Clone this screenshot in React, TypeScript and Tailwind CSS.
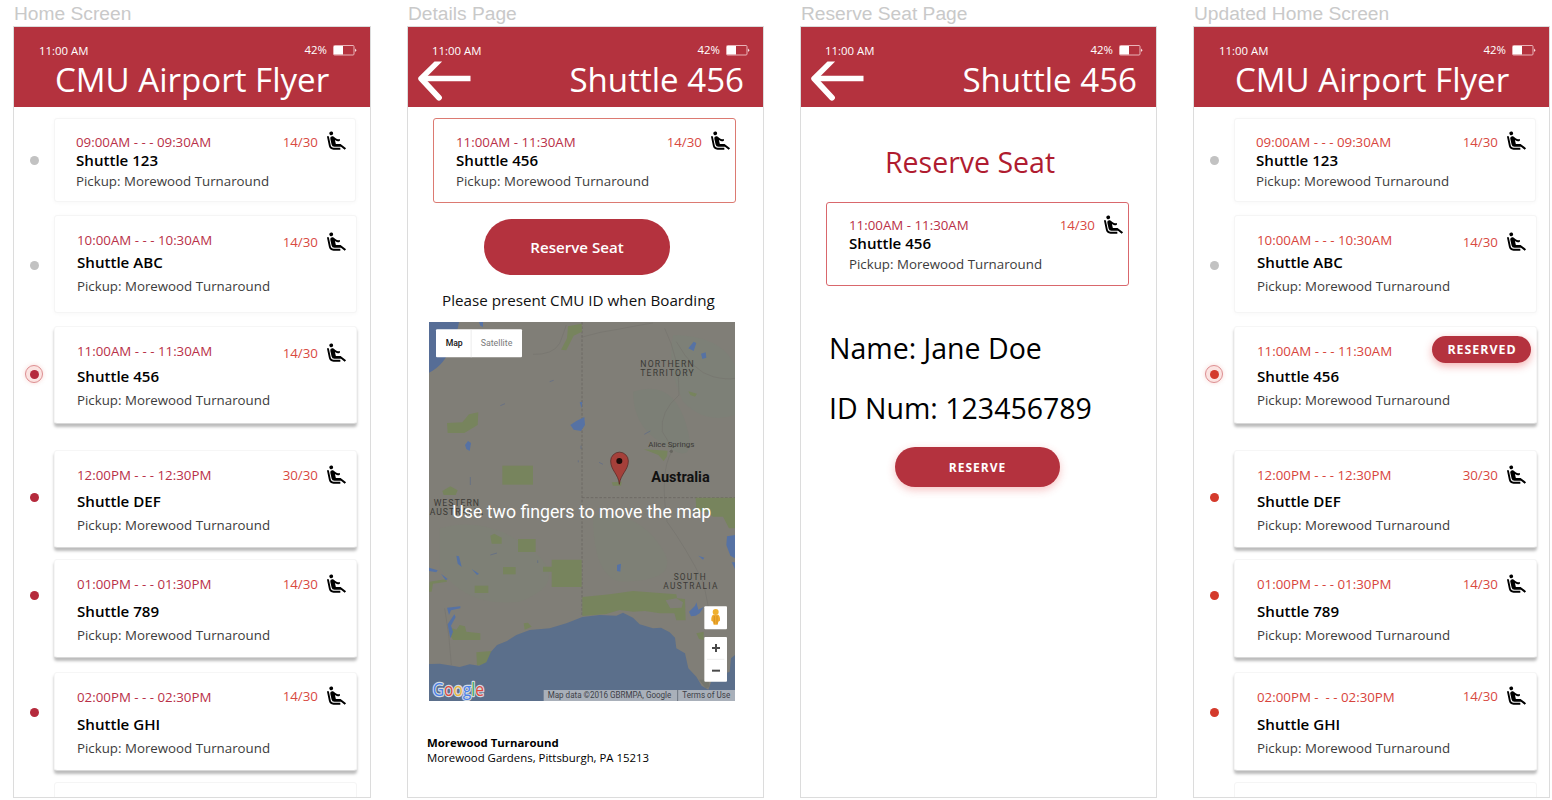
import type { ReactNode } from 'react';
import { MdAirlineSeatReclineExtra } from 'react-icons/md';

type Dot = 'past' | 'current' | 'next';

type Ride = {
  time: string;
  name: string;
  seats: string;
  dot: Dot;
  dotOffset: string;
  top: string;
  card: string;
  textPad: string;
  nameGap: string;
  pickupGap: string;
  seatPad: string;
  countGap: string;
};

const flat = 'border border-[#f5f5f5] shadow-[0_1px_4px_rgba(0,0,0,0.03)]';
const raised = 'border border-[#f6f6f6] border-b-[#d8d8d8] shadow-[0_3px_3px_rgba(0,0,0,0.27)]';

const rides: Ride[] = [
  {
    time: '09:00AM - - - 09:30AM', name: 'Shuttle 123', seats: '14/30', dot: 'past', dotOffset: 'pt-[38px]',
    top: 'mt-[11px]', card: `h-[84px] w-[302px] ${flat}`,
    textPad: 'pt-[14px] pl-[21px]', nameGap: 'mt-0', pickupGap: 'mt-[3px]', seatPad: 'pt-[10px] pr-[8px]', countGap: 'mt-[4px]',
  },
  {
    time: '10:00AM - - - 10:30AM', name: 'Shuttle ABC', seats: '14/30', dot: 'past', dotOffset: 'pt-[46px]',
    top: 'mt-[13px]', card: `h-[98px] w-[303px] ${flat}`,
    textPad: 'pt-[15px] pl-[22px]', nameGap: 'mt-[4px]', pickupGap: 'mt-[6px]', seatPad: 'pt-[14px] pr-[9px]', countGap: 'mt-[3px]',
  },
  {
    time: '11:00AM - - - 11:30AM', name: 'Shuttle 456', seats: '14/30', dot: 'current', dotOffset: 'pt-[39px]',
    top: 'mt-[13px]', card: `h-[98px] w-[303px] ${raised}`,
    textPad: 'pt-[15px] pl-[22px]', nameGap: 'mt-[7px]', pickupGap: 'mt-[6px]', seatPad: 'pt-[14px] pr-[9px]', countGap: 'mt-[3px]',
  },
  {
    time: '12:00PM - - - 12:30PM', name: 'Shuttle DEF', seats: '30/30', dot: 'next', dotOffset: 'pt-[43px]',
    top: 'mt-[26px]', card: `h-[98px] w-[303px] ${raised}`,
    textPad: 'pt-[15px] pl-[22px]', nameGap: 'mt-[8px]', pickupGap: 'mt-[6px]', seatPad: 'pt-[12px] pr-[9px]', countGap: 'mt-[3px]',
  },
  {
    time: '01:00PM - - - 01:30PM', name: 'Shuttle 789', seats: '14/30', dot: 'next', dotOffset: 'pt-[32px]',
    top: 'mt-[11px]', card: `h-[99px] w-[303px] ${raised}`,
    textPad: 'pt-[15px] pl-[22px]', nameGap: 'mt-[9px]', pickupGap: 'mt-[6px]', seatPad: 'pt-[12px] pr-[9px]', countGap: 'mt-[3px]',
  },
  {
    time: '02:00PM - - - 02:30PM', name: 'Shuttle GHI', seats: '14/30', dot: 'next', dotOffset: 'pt-[36px]',
    top: 'mt-[14px]', card: `h-[99px] w-[303px] ${raised}`,
    textPad: 'pt-[15px] pl-[22px]', nameGap: 'mt-[9px]', pickupGap: 'mt-[6px]', seatPad: 'pt-[11px] pr-[9px]', countGap: 'mt-[3px]',
  },
];

function Battery() {
  return (
    <svg width="24" height="11" viewBox="0 0 24 11" className="block">
      <rect x="0.5" y="0.5" width="20.500" height="9.500" rx="1" fill="none" stroke="#e9b4b8" />
      <rect x="1" y="1" width="9" height="8.500" fill="#fff" />
      <path d="M22 3.500 L23.600 5.200 L22 7Z" fill="#f6dcde" />
    </svg>
  );
}

function BackArrow() {
  return (
    <svg width="54" height="42" viewBox="0.5 0.3 54 42" className="block">
      <path d="M53 17.800H5" stroke="#fff" strokeWidth="5.400" fill="none" />
      <path
        d="M17 0.800 H24.600 L7.600 17.800 L23.600 35 A2.900 2.900 0 0 1 19.400 39 L1.200 19.600 Q0 17.800 1.200 16.200 Z"
        fill="#fff"
      />
    </svg>
  );
}

function Header({ title, back = false }: { title: string; back?: boolean }) {
  return (
    <div className="flex h-[80px] shrink-0 flex-col bg-[#b4323e] text-white">
      <div className="flex items-start justify-between pt-[15px] pr-[13px] pl-[25px] text-[11.4px] leading-[16px]">
        <span className={back ? '-ml-px pt-px' : 'pt-px'}>11:00 AM</span>
        <span className="flex items-start gap-[6px]">
          <span>42%</span>
          <span className="pt-[3px]">
            <Battery />
          </span>
        </span>
      </div>
      {back ? (
        <div className="flex items-start justify-between pr-[19px] pl-[10px]">
          <div className="pt-[2px]">
            <BackArrow />
          </div>
          <span className="mt-px text-[33.1px] leading-[40px] whitespace-nowrap">{title}</span>
        </div>
      ) : (
        <span className="mt-px pl-[41px] text-[33.1px] leading-[40px] whitespace-nowrap">{title}</span>
      )}
    </div>
  );
}

function Artboard({ label, width, children }: { label: string; width: string; children: ReactNode }) {
  return (
    <section className={`flex shrink-0 flex-col ${width}`}>
      <h2 className="h-[26px] pt-[3px] pl-[1px] font-['Liberation_Sans',sans-serif] text-[19.2px] leading-[21px] whitespace-nowrap text-[#c9c9c9]">
        {label}
      </h2>
      <div className="flex h-[772px] flex-col overflow-hidden border border-[#dcdcdc] bg-white">{children}</div>
    </section>
  );
}

function StatusDot({ kind, tone }: { kind: Dot; tone: string }) {
  if (kind === 'current') {
    return (
      <span className="flex size-[18px] items-center justify-center rounded-full border border-[#dd8f92] bg-[#fbe3e1] shadow-[0_0_4px_rgba(230,90,80,0.25)]">
        <span className={`size-[9px] rounded-full ${tone}`} />
      </span>
    );
  }
  return <span className={`size-[9px] rounded-full ${kind === 'past' ? 'bg-[#c2c2c2]' : tone}`} />;
}

function Seats({ value, gap }: { value: string; gap: string }) {
  return (
    <div className="flex items-start gap-[7px]">
      <span className={`text-[13.33px] leading-[18px] text-[#d8493f] ${gap}`}>{value}</span>
      <MdAirlineSeatReclineExtra className="-mr-px size-[23px] translate-y-[0.5px] text-black" />
    </div>
  );
}

function RideText({ time, name, tone, nameGap, pickupGap }: { time: string; name: string; tone: string; nameGap: string; pickupGap: string }) {
  return (
    <div className="flex flex-col whitespace-nowrap">
      <span className={`text-[13.3px] leading-[18px] whitespace-pre ${tone}`}>{time}</span>
      <span className={`text-[15.1px] leading-[18px] font-semibold text-black ${nameGap}`}>{name}</span>
      <span className={`text-[13.3px] leading-[18px] text-[#3c3c3c] ${pickupGap}`}>Pickup: Morewood Turnaround</span>
    </div>
  );
}

function HomeScreen({ updated = false }: { updated?: boolean }) {
  const timeTone = updated ? 'text-[#d8443c]' : 'text-[#b93048]';
  const dotTone = updated ? 'bg-[#d43a2c]' : 'bg-[#b52a3c]';
  return (
    <>
      <Header title="CMU Airport Flyer" />
      {rides.map((ride) => {
        const reserved = updated && ride.dot === 'current';
        const time = updated && ride.name === 'Shuttle GHI' ? '02:00PM -  - - 02:30PM' : ride.time;
        return (
          <div key={ride.name} className={`flex shrink-0 items-start ${ride.top}`}>
            <div className={`flex w-10 shrink-0 justify-center ${ride.dotOffset}`}>
              <StatusDot kind={ride.dot} tone={dotTone} />
            </div>
            <div className={`relative flex shrink-0 items-start justify-between rounded-[3px] bg-white ${ride.card}`}>
              <div className={ride.textPad}>
                <RideText time={time} name={ride.name} tone={timeTone} nameGap={ride.nameGap} pickupGap={ride.pickupGap} />
              </div>
              {reserved ? (
                <div className="absolute top-[9px] right-[5px] flex h-[27px] w-[99px] items-center justify-center rounded-full bg-[#b4323e] pt-px pl-px text-[12.4px] font-bold tracking-[1px] text-white shadow-[0_3px_8px_rgba(225,60,60,0.4)]">
                  RESERVED
                </div>
              ) : (
                <div className={ride.seatPad}>
                  <Seats value={ride.seats} gap={ride.countGap} />
                </div>
              )}
            </div>
          </div>
        );
      })}
      <div className="mt-[11px] ml-10 h-[98px] w-[303px] shrink-0 rounded-[3px] border border-[#f5f5f5]" />
    </>
  );
}

function SelectedRide({ margin, border, pad }: { margin: string; border: string; pad: string }) {
  return (
    <div className={`flex w-[303px] shrink-0 items-start justify-between rounded-[3px] border ${border} ${margin}`}>
      <div className={`pl-[22px] ${pad}`}>
        <RideText time="11:00AM - 11:30AM" name="Shuttle 456" tone="text-[#b93048]" nameGap="mt-0" pickupGap="mt-[3px]" />
      </div>
      <div className="pt-[10px] pr-[4px]">
        <Seats value="14/30" gap={pad === 'pt-[13px]' ? 'mt-[3px]' : 'mt-[4px]'} />
      </div>
    </div>
  );
}

function MapView() {
  return (
    <svg
      width="306"
      height="379"
      viewBox="28 21 918 1137"
      className="mt-[11px] ml-[21px] block shrink-0"
      fontFamily="Roboto, sans-serif"
    >
      <rect x="28" y="21" width="918" height="1137" fill="#807e77" />
      <path d="M640 230 Q760 190 800 330 T720 380 Q640 330 640 230Z" fill="#7c7f76" />
      <path d="M760 60 Q900 60 946 150 V300 Q860 330 790 260 Q740 150 760 60Z" fill="#7d8077" />
      <path d="M60 640 Q200 600 330 700 T300 860 Q140 880 60 760Z" fill="#7e8076" />
      <path d="M520 600 Q640 580 720 690 T600 800 Q520 780 520 600Z" fill="#7e8076" />
      <g fill="none" stroke="#74726b" strokeWidth="1.6">
        <path d="M488 66 Q540 50 600 42 Q660 30 700 24" />
        <path d="M735 40 Q780 130 778 240 Q720 290 728 350 Q760 400 756 410 Q720 470 742 620 Q800 700 850 800 Q860 840 870 900" />
        <path d="M340 118 Q400 120 420 85 Q430 60 440 30" />
        <path d="M770 80 Q820 170 880 185 Q920 195 946 190" />
        <path d="M75 880 Q90 960 95 1050" />
      </g>
      <g fill="none" stroke="#68665f" strokeWidth="2.4" strokeDasharray="8 5">
        <path d="M487 21 V900" />
        <path d="M487 548 H946" />
      </g>
      {/* parks */}
      <g fill="#77845d">
        <path d="M445 34 L486 26 L487 50 L462 62 L440 106 L424 104 L442 70Z" />
        <path d="M82 324 L128 322 L148 298 L176 292 L174 330 L134 354 L84 354Z" />
        <path d="M248 452 H340 V509 H248Z" />
        <path d="M68 528 L92 514 L114 526 L108 540 H72Z" />
        <path d="M672 403 L744 407 L742 424 L732 438 L716 420Z" />
        <path d="M806 229 L832 236 L826 245 L812 240Z" />
        <path d="M576 502 L606 500 L604 512 H580Z" />
        <path d="M828 548 H946 V640 H928 L910 605 H880 L860 590 H830Z" />
        <path d="M212 662 L224 656 L246 668 V686 H216Z" />
        <path d="M295 672 H348 V711 H295Z" />
        <path d="M396 734 H486 V816 H396 V770 H370 V755 H396Z" />
        <path d="M250 756 H288 V778 H250Z" />
        <path d="M165 812 H206 V834 H165Z" />
        <path d="M488 846 L570 838 L640 828 L770 838 L772 850 L796 852 L798 916 H770 L764 895 L720 895 L676 888 L640 890 L600 885 L560 897 L488 903Z" />
        <path d="M92 960 L98 940 L110 944 L120 930 L136 934 L140 950 L182 955 V975 H100Z" />
        <path d="M170 1012 L215 1008 L205 1045 L172 1052Z" />
        <path d="M312 925 L325 923 L336 935 L315 944Z" />
        <path d="M830 955 L852 950 L852 975 L838 972Z" />
        <path d="M30 800 L80 792 L82 800 L40 806 L36 830 L28 830Z" />
      </g>
      <path d="M738 856 L770 850 L790 862 L786 878 L752 880Z" fill="#807e77" />
      {/* lakes */}
      <g fill="#5672a4">
        <path d="M28 21 H118 Q112 60 96 90 Q76 150 28 173Z" fill="#566d96" />
        <path d="M178 21 H190 V36 L182 32Z" />
        <path d="M452 330 L470 318 L494 306 L496 330 L484 348 L462 344Z" />
        <path d="M480 262 L488 260 L486 280Z" />
        <path d="M136 390 L145 378 L154 384 L150 408 L140 402Z" />
        <path d="M806 100 L822 80 L830 84 L822 108Z" />
        <path d="M844 116 L858 112 L860 128 L848 132Z" />
        <path d="M110 722 L118 724 L126 756 L114 746Z" />
        <path d="M28 758 L54 766 L50 772 L28 768Z" />
        <path d="M64 776 L84 792 L78 796Z" />
        <path d="M156 762 L178 776 L172 780Z" />
        <path d="M82 878 L122 874 L122 880 L94 886 L88 900Z" />
        <path d="M84 928 L104 898 L108 906 L94 932 L100 950 L92 970 L88 950Z" />
        <path d="M592 750 L604 746 L602 770 L592 768Z" />
        <path d="M836 722 L854 728 L850 734Z" />
        <path d="M922 664 L946 660 V730 L932 722 L920 690Z" />
        <path d="M808 890 L826 872 L830 862 L836 884 L852 876 L840 895 L828 902 L814 904Z" />
        <path d="M936 742 H946 V762Z" />
      </g>
      <g stroke="#5c6a8a" strokeWidth="2" fill="none">
        <path d="M390 200 L402 196" />
        <path d="M242 272 L256 266" />
        <path d="M538 442 L550 448" />
        <path d="M674 358 L692 348" />
        <path d="M212 720 L232 714" />
        <path d="M354 736 V744" />
        <path d="M152 486 V510" />
        <path d="M484 392 V402 M476 436 V442" />
      </g>
      {/* ocean */}
      <path
        d="M28 1047 L60 1046 L98 1052 L120 1056 L150 1048 L178 1052 L200 1042 L214 1010 L232 990 L262 978 L290 960 L330 945 L390 940 L440 925 L488 906 L540 900 L590 902 L610 893 L640 908 L660 928 L700 940 L724 938 L750 952 L766 968 L770 1000 L796 1015 L806 1060 L830 1085 L846 1112 L866 1124 L878 1090 L930 1070 L934 1030 L946 1020 V1158 H28Z"
        fill="#5b6f8b"
      />
      <path d="M838 1094 L866 1094 L870 1116 L858 1120Z" fill="#74766d" />
      {/* place names */}
      <g fill="#3b3a36">
        <text x="662" y="157" fontSize="26" textLength="160">NORTHERN</text>
        <text x="662" y="184" fontSize="26" textLength="160">TERRITORY</text>
        <text x="686" y="397" fontSize="24" textLength="138" lengthAdjust="spacingAndGlyphs">Alice Springs</text>
        <text x="42" y="573" fontSize="26" textLength="136">WESTERN</text>
        <text x="30" y="600" fontSize="26" textLength="160">AUSTRALIA</text>
        <text x="762" y="794" fontSize="25" textLength="96">SOUTH</text>
        <text x="731" y="821" fontSize="25" textLength="162">AUSTRALIA</text>
      </g>
      <circle cx="755" cy="409" r="5" fill="#66655f" />
      <text x="695" y="502" fontSize="43" fontWeight="700" fill="#111" textLength="175" lengthAdjust="spacingAndGlyphs">Australia</text>
      {/* marker */}
      <path d="M599 508 C597 478 573 466 573 438 A26.5 26.5 0 0 1 626 438 C626 466 602 478 599 508Z" fill="#a5403a" stroke="#5e2d29" strokeWidth="2.5" />
      <circle cx="599" cy="438" r="9" fill="#1d0c0a" />
      <text x="98" y="608" fontSize="55" fill="#fff" textLength="777" lengthAdjust="spacingAndGlyphs">Use two fingers to move the map</text>
      {/* map type switch */}
      <rect x="49" y="43" width="258" height="84" rx="3" fill="#fff" />
      <path d="M154.500 43 V127" stroke="#e4e4e4" strokeWidth="2" />
      <text x="78" y="93" fontSize="26" fontWeight="500" fill="#111" textLength="51">Map</text>
      <text x="183" y="93" fontSize="26" fill="#7a7a7a" textLength="95" lengthAdjust="spacingAndGlyphs">Satellite</text>
      {/* street view and zoom controls */}
      <rect x="854" y="874" width="68" height="69" rx="3" fill="#fff" />
      <circle cx="888" cy="891" r="9" fill="#efb02f" />
      <path d="M880 899 H896 Q902 903 901 917 L896 920 L894 929 H882 L880 920 L875 917 Q874 903 880 899Z" fill="#efa92c" />
      <path d="M884 903 V926 M892 903 V926" stroke="#c9861c" strokeWidth="2" />
      <rect x="854" y="966" width="68" height="134" rx="3" fill="#fff" />
      <path d="M862 1033 H914" stroke="#e6e6e6" strokeWidth="2" />
      <path d="M877 999 H901 M889 987 V1011" stroke="#4a4a4a" strokeWidth="6" />
      <path d="M877 1067 H901" stroke="#4a4a4a" strokeWidth="6" />
      {/* attribution */}
      <text x="39" y="1142" fontSize="53" fontWeight="500" textLength="154" lengthAdjust="spacingAndGlyphs" stroke="#d3dbe4" strokeWidth="7" strokeLinejoin="round" paintOrder="stroke" fontFamily="'Open Sans', sans-serif">
        <tspan fill="#4a80e8">G</tspan>
        <tspan fill="#df4a3d">o</tspan>
        <tspan fill="#efb83a">o</tspan>
        <tspan fill="#4a80e8">g</tspan>
        <tspan fill="#3da75a">l</tspan>
        <tspan fill="#df4a3d">e</tspan>
      </text>
      <rect x="372" y="1125" width="574" height="33" fill="#a9b0ba" />
      <path d="M774 1125 V1158" stroke="#6b7480" strokeWidth="3" />
      <text x="384" y="1149" fontSize="26" fill="#3d4148" textLength="371" lengthAdjust="spacingAndGlyphs">Map data ©2016 GBRMPA, Google</text>
      <text x="788" y="1149" fontSize="26" fill="#3d4148" textLength="144" lengthAdjust="spacingAndGlyphs">Terms of Use</text>
    </svg>
  );
}

export default function App() {
  return (
    <main className="flex h-[800px] w-[1552px] gap-9 overflow-hidden bg-white pl-[13px] font-['Open_Sans',sans-serif]">
      <Artboard label="Home Screen" width="w-[358px]">
        <HomeScreen />
      </Artboard>

      <Artboard label="Details Page" width="w-[357px]">
        <Header title="Shuttle 456" back />
        <SelectedRide margin="mt-[11px] ml-[25px] h-[85px]" border="border-[#dc7a72]" pad="pt-[14px]" />
        <button className="mt-[16px] ml-[76px] h-[56px] w-[186px] shrink-0 rounded-full bg-[#b4323e] pt-px text-[15.1px] font-semibold text-white">
          Reserve Seat
        </button>
        <p className="mt-[14px] ml-[34px] text-[15.2px] leading-[22px] whitespace-nowrap text-[#111]">
          Please present CMU ID when Boarding
        </p>
        <MapView />
        <div className="mt-[34px] ml-[19px] text-[11.4px] leading-[15px] whitespace-nowrap text-black">
          <p className="font-bold">Morewood Turnaround</p>
          <p>Morewood Gardens, Pittsburgh, PA 15213</p>
        </div>
      </Artboard>

      <Artboard label="Reserve Seat Page" width="w-[357px]">
        <Header title="Shuttle 456" back />
        <h1 className="mt-[35px] ml-[84px] text-[28.5px] leading-[40px] whitespace-nowrap text-[#b01c30]">Reserve Seat</h1>
        <SelectedRide margin="mt-[20px] ml-[25px] h-[84px]" border="border-[#d9676c]" pad="pt-[13px]" />
        <div className="mt-[42px] ml-[28px] flex flex-col gap-[20px] text-[28.5px] leading-[40px] whitespace-nowrap text-black">
          <p>Name: Jane Doe</p>
          <p>ID Num: 123456789</p>
        </div>
        <button className="mt-[19px] ml-[94px] h-[40px] w-[165px] shrink-0 rounded-full bg-[#b4323e] pt-px text-[12px] font-bold tracking-[1px] text-white shadow-[0_3px_8px_rgba(225,60,60,0.3)]">
          RESERVE
        </button>
      </Artboard>

      <Artboard label="Updated Home Screen" width="w-[357px]">
        <HomeScreen updated />
      </Artboard>
    </main>
  );
}
